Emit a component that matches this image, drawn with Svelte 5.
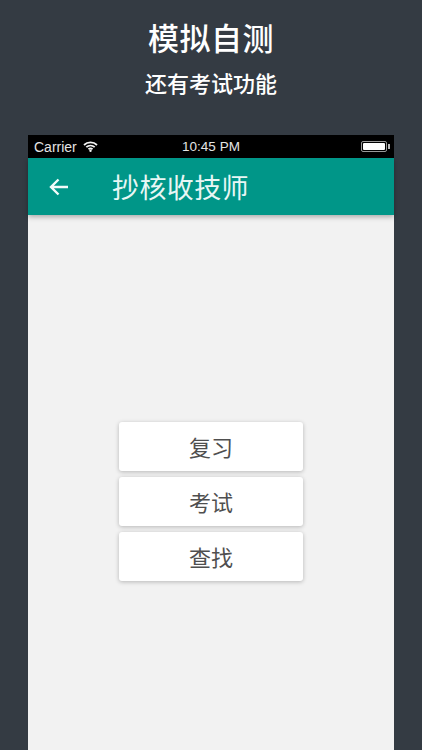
<script>
  const actions = ['复习', '考试', '查找'];
</script>

<div class="page">
  <header class="caption">
    <h1>模拟自测</h1>
    <p>还有考试功能</p>
  </header>

  <div class="phone">
    <div class="status">
      <div class="carrier">
        <span>Carrier</span>
        <svg class="wifi" width="15" height="11" viewBox="0 0 15 11">
          <path d="M1 4C4.600.6 10.400.6 14 4" />
          <path d="M3.300 6.200C5.700 4 9.300 4 11.700 6.200" />
          <path d="M5.500 8.200C6.700 7.200 8.300 7.200 9.500 8.200" />
          <circle cx="7.500" cy="9.700" r="1.200" />
        </svg>
      </div>
      <span class="time">10:45 PM</span>
      <div class="battery"><i></i></div>
    </div>

    <div class="toolbar">
      <svg class="back" width="20" height="18" viewBox="0 0 20 18">
        <path d="M19 9H2M9.500 1.500 2 9l7.500 7.500" />
      </svg>
      <span class="title">抄核收技师</span>
    </div>

    <main class="content">
      {#each actions as action}
        <button class="action">{action}</button>
      {/each}
    </main>
  </div>
</div>

<style>
  :global(body) {
    margin: 0;
    background: #343b43;
  }

  .page {
    height: 750px;
    overflow: hidden;
    background: #343b43;
    font-family: "Liberation Sans", "Noto Sans CJK SC", sans-serif;
  }

  .caption {
    height: 135px;
    box-sizing: border-box;
    padding-top: 21px;
    text-align: center;
    color: #fff;
  }

  .caption h1 {
    margin: 0;
    font-size: 31px;
    line-height: 38px;
    font-weight: 500;
    letter-spacing: 0.5px;
  }

  .caption p {
    margin: 12px 0 0;
    font-size: 22px;
    line-height: 28px;
    font-weight: 500;
  }

  .phone {
    margin: 0 28px;
    height: 615px;
    display: flex;
    flex-direction: column;
  }

  .status {
    height: 23px;
    flex: none;
    box-sizing: border-box;
    padding: 0 6px;
    background: #000;
    color: #e4e4e4;
    display: grid;
    grid-template-columns: 1fr auto 1fr;
    align-items: center;
    font-size: 14px;
  }

  .carrier {
    display: flex;
    align-items: center;
    gap: 6px;
  }

  .wifi {
    fill: none;
    stroke: #f4f4f4;
    stroke-width: 1.800;
  }

  .wifi circle {
    fill: #f4f4f4;
    stroke: none;
  }

  .time {
    font-size: 13.500px;
    font-weight: 500;
  }

  .battery {
    justify-self: end;
    position: relative;
    width: 22px;
    height: 7px;
    margin-right: 1px;
    padding: 1px;
    border: 1px solid #999;
    border-radius: 2px;
  }

  .battery i {
    display: block;
    height: 100%;
    border-radius: 1px;
    background: #fff;
  }

  .battery::after {
    content: "";
    position: absolute;
    right: -4px;
    top: 2px;
    width: 2px;
    height: 5px;
    background: #bbb;
  }

  .toolbar {
    height: 57px;
    flex: none;
    box-sizing: border-box;
    padding-left: 21px;
    display: flex;
    align-items: center;
    background: #009688;
    color: #fff;
    box-shadow: 0 2px 5px rgba(0, 0, 0, 0.3);
    position: relative;
  }

  .back {
    fill: none;
    stroke: #f2fbfa;
    stroke-width: 2.400;
  }

  .title {
    margin-left: 43px;
    font-size: 27px;
    letter-spacing: 0.4px;
    color: #e8f7f5;
  }

  .content {
    flex: 1;
    background: #f2f2f2;
    display: flex;
    flex-direction: column;
    align-items: center;
    gap: 6px;
    padding-top: 207px;
  }

  .action {
    width: 184px;
    height: 49px;
    padding: 0 0 2px;
    border: 0;
    border-radius: 3px;
    background: #fff;
    color: #4f4f4f;
    font-family: inherit;
    font-size: 22px;
    box-shadow: 0 1px 4px rgba(0, 0, 0, 0.25);
  }
</style>
